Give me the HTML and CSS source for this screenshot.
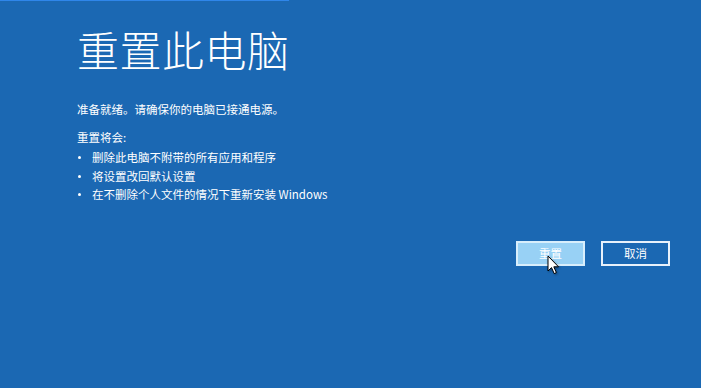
FILE: index.html
```html
<!DOCTYPE html>
<html lang="zh-CN">
<head>
  <meta charset="UTF-8" />
  <meta name="viewport" content="width=device-width, initial-scale=1.0" />
  <title>重置此电脑</title>
  <link rel="stylesheet" href="styles.css">
</head>
<body>
  <div class="topline"></div>
  <div class="screen">
    <h1 class="title">重置此电脑</h1>
    <p class="ready">准备就绪。请确保你的电脑已接通电源。</p>

    <p class="will">重置将会:</p>
    <ul class="list">
      <li>删除此电脑不附带的所有应用和程序</li>
      <li>将设置改回默认设置</li>
      <li>在不删除个人文件的情况下重新安装 Windows</li>
    </ul>

    <div class="actions">
      <button class="btn btn-primary">重置</button>
      <button class="btn">取消</button>
      <!-- mouse pointer over the reset button -->
      <svg class="cursor" width="13" height="20" viewBox="0 0 13 20">
        <path d="M1 1 L1 16 L4.5 12.6 L7.2 18.6 L9.4 17.6 L6.8 11.8 L11.5 11.8 Z" fill="#fff" stroke="#000" stroke-width="1" stroke-linejoin="round"/>
      </svg>
    </div>
  </div>
</body>
</html>
```

FILE: styles.css
```css
html, body {
  margin: 0;
  padding: 0;
  height: 100%;
}

body {
  background: #1b68b3;
  color: #fff;
  font-family: "Noto Sans CJK SC", "Liberation Sans", sans-serif;
  overflow: hidden;
}

.topline {
  width: 289px;
  height: 1px;
  background: #2f86ea;
}

.screen {
  padding: 0 31px 0 77px;
}

.title {
  font-size: 42px;
  font-weight: 300;
  line-height: 50px;
  margin: 23px 0 0;
  letter-spacing: 0.5px;
}

.ready {
  font-size: 11.5px;
  line-height: 18px;
  margin: 26px 0 0;
}

.will {
  font-size: 11.5px;
  line-height: 18px;
  margin: 10px 0 0;
}

.list {
  list-style: none;
  margin: 2px 0 0;
  padding: 0;
  font-size: 11.5px;
}

.list li {
  line-height: 18.5px;
  padding-left: 15px;
  position: relative;
}

.list li::before {
  content: "";
  position: absolute;
  left: 1px;
  top: 8px;
  width: 3px;
  height: 3px;
  border-radius: 50%;
  background: #fff;
}

.actions {
  display: flex;
  justify-content: flex-end;
  gap: 16px;
  margin-top: 37px;
  position: relative;
}

.btn {
  width: 69px;
  height: 25px;
  border: 2px solid #e8f1fb;
  background: transparent;
  color: #fff;
  font-family: "Noto Sans CJK SC", "Liberation Sans", sans-serif;
  font-size: 11.5px;
  padding: 0;
}

.btn-primary {
  background: #98d1f5;
  border-color: #d8eefc;
}

.cursor {
  position: absolute;
  left: 470px;
  top: 14px;
  filter: drop-shadow(1px 1px 1px rgba(0, 0, 0, 0.35));
}
```
